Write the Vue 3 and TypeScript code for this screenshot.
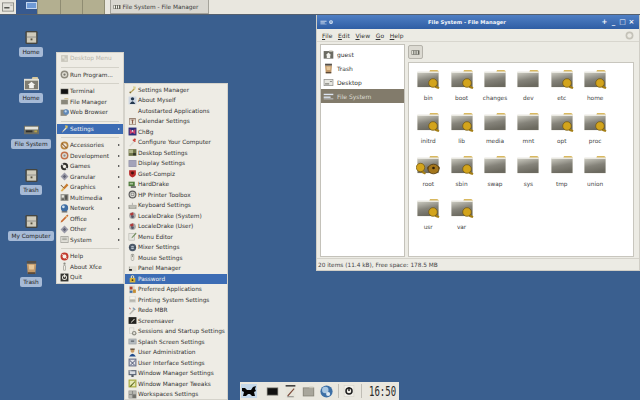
<script setup lang="ts">
import { h, type FunctionalComponent } from 'vue'

type Shape = [string, string]
const r = (x: number, y: number, w: number, hh: number) => `M${x} ${y}h${w}v${hh}h${-w}z`
const c = (x: number, y: number, q: number) => `M${x - q} ${y}a${q} ${q} 0 1 0 ${q * 2} 0a${q} ${q} 0 1 0 ${-q * 2} 0z`
const folder = (body: string, tab = '#c9b27a'): Shape[] => [
  ['M8 2h6q1 0 1 1v2H7z', tab],
  [r(1, 4, 14, 10), '#e4e2da'],
  [r(2, 5, 12, 8), body],
]
const diamond: Shape[] = [
  ['M8 1l7 7-7 7-7-7z', '#9a9aa8'],
  ['M8 5l3 3-3 3-3-3z', '#5f6270'],
]
const locale: Shape[] = [
  [c(8, 8, 6), '#a8a8a8'],
  ['M3 5l6-3 1 4-4 3z', '#b03a3a'],
  [c(8, 10, 2.5), '#555566'],
]
const icons: Record<string, Shape[]> = {
  driveBox: [['M3 1h10q1.500 0 1.500 1.500v11q0 1.500-1.500 1.500H3q-1.500 0-1.500-1.500v-11Q1.500 1 3 1z', '#45453f'], [r(3, 2.5, 10, 11), '#cfcbbb'], [r(3, 7, 10, 1), '#8f8f8a'], [r(7, 9, 2, 2), '#55503f']],
  homeFolder: [['M9 1h5q1 0 1 1v2H8z', '#d8c89a'], [r(0, 3, 16, 12), '#e0dfd6'], [r(1, 5, 14, 9), '#7f7d72'], ['M8 6l4 3.500h-1.500V13h-5V9.500H4z', '#f4f4f0']],
  fsDrive: [[r(0, 4, 16, 9), '#6e6e62'], [r(1, 5, 14, 3), '#e4e4dc'], [r(2, 9, 7, 2), '#2e2e2a'], [r(11, 9, 3, 2), '#b7a44a']],
  trash: [[r(3, 1, 10, 3), '#55504a'], ['M3 4h10l-1 11H4z', '#c39a6a'], ['M5 5h6l-.5 5h-5z', '#e6c79a'], [r(4, 13, 8, 2), '#5b4a3a']],
  desk: [[r(1, 3, 14, 10), '#8b8b87'], [r(2, 4, 12, 8), '#e6e6e0'], [r(3, 9, 6, 2), '#8a8a84'], [r(10, 6, 3, 1), '#666']],
  faded: [[r(2, 2, 12, 12), '#c8c6bc'], [r(4, 4, 4, 4), '#e6e4da'], [r(8, 8, 4, 4), '#dedcd2']],
  run: [[c(8, 8, 7), '#8d8a7e'], [c(8, 8, 4.5), '#dcdad0'], [c(8, 8, 2), '#77756c']],
  terminal: [[r(1, 3, 14, 10), '#77776f'], [r(2, 4, 12, 8), '#111']],
  fileman: folder('#8a887c'),
  web: [[r(1, 3, 11, 11), '#8c8a80'], [c(11, 7, 5), '#5f88b8'], [c(10, 6, 2), '#c6d8ea']],
  settings: [['M3 14l7-8 2 2-8 7z', '#e8e4d0'], ['M9 2l5 1-1 5-3-1z', '#d8c060'], ['M2 15l2-3 1 1z', '#555']],
  access: [[c(8, 8, 7), '#b88440'], [c(8, 8, 4), '#efe6d4'], ['M4 4l8 8-1 1-8-8z', '#703f1c']],
  dev: [[c(8, 8, 7), '#c0704a'], [c(8, 8, 4.5), '#d9d8d2'], [c(8, 8, 2), '#8b8b8b']],
  games: [[c(8, 8, 6.5), '#33332f'], [c(8, 8, 3), '#f2f0e8'], [c(4, 4, 2), '#ddd'], [c(12, 12, 2), '#ddd']],
  granular: diamond,
  graphics: [['M12 1l3 3-7 7-3-2z', '#c87a2c'], ['M5 9l3 2-4 4-3-1z', '#e0b050'], ['M2 3l5 5-1 1-5-5z', '#70502a']],
  multimedia: [[r(1, 2, 14, 12), '#8f8f88'], [r(3, 4, 4, 4), '#e8e8e0'], [r(9, 4, 4, 8), '#55554f'], [r(3, 10, 4, 2), '#55554f']],
  network: [[c(8, 7, 6.5), '#3f6ea3'], [c(6, 5, 2.5), '#cfe0ef'], [r(3, 13, 10, 2), '#555']],
  office: [['M13 1l2 2L4 14l-3 1 1-3z', '#c86a30'], ['M11 3l2 2-2 2-2-2z', '#e8c080']],
  system: [[r(1, 2, 14, 12), '#8d8d86'], [r(2, 3, 12, 10), '#e0dfd8'], [r(4, 5, 8, 1), '#77776f'], [r(4, 8, 8, 1), '#77776f']],
  help: [[c(8, 8, 7), '#c23b2e'], [c(8, 8, 3.5), '#f4f2ea'], ['M3 3l3 2-1 1-2-2zM13 13l-3-2 1-1 2 2z', '#f4f2ea']],
  about: [[c(8, 3, 2), '#8b8b82'], [r(6, 6, 4, 9), '#8b8b82'], [r(7, 7, 2, 7), '#f0eee6']],
  quit: [[r(1, 1, 14, 14), '#33332f'], [c(8, 8, 4.5), '#e8e6de'], [c(8, 8, 2.8), '#33332f'], [r(7, 2, 2, 6), '#e8e6de']],
  mgr: [['M3 14l7-8 2 2-8 7z', '#b8a050'], ['M9 2l5 1-1 5-3-1z', '#d8d090'], [c(4, 13, 1.5), '#7b6a30']],
  myself: [[r(1, 1, 14, 14), '#cfd7e2'], [c(8, 5, 3), '#23374f'], ['M3 14q5-9 10 0z', '#23374f']],
  calendar: [[r(2, 2, 12, 12), '#8d7565'], [r(3, 4, 10, 9), '#e7e1d6'], [r(7, 5, 2, 7), '#8b5a44'], [r(5, 5, 6, 1), '#8b5a44']],
  chbg: [[r(1, 1, 14, 14), '#2b2f7a'], ['M3 3l5 5 5-5v10l-5-3-5 3z', '#c9406e'], [c(8, 7, 1.5), '#f0f0f0']],
  configure: [['M2 14l9-10 2 2-9 9z', '#d8d6d0'], ['M9 2l5 4-2 1-4-3z', '#d23a32'], [c(12, 3, 2), '#c23a32']],
  desktopS: [[r(1, 2, 14, 12), '#6e7448'], [r(2, 3, 7, 6), '#b2b58c'], [r(9, 9, 5, 4), '#33352a']],
  displayS: [[r(1, 2, 14, 12), '#8c8ca4'], [r(2, 3, 12, 10), '#a3a3ba']],
  compiz: [['M2 2h12v7q0 4-6 6-6-2-6-6z', '#b82a2a'], [c(8, 7, 2.6), '#47120f']],
  hard: [[r(1, 3, 11, 8), '#4e7a3c'], [r(3, 5, 6, 3), '#a8c09a'], [r(5, 11, 9, 3), '#666']],
  hp: [[c(8, 8, 7), '#5a5a5a'], [c(8, 8, 5), '#d6d6d0'], [r(5, 5, 6, 5), '#666'], [r(6, 6, 4, 3), '#e4e4de']],
  keyboard: [[r(1, 7, 14, 7), '#9a9a92'], [r(2, 8, 12, 2), '#d2d2cb'], [r(3, 11, 10, 2), '#c4c4bc'], [r(7, 3, 1, 4), '#888']],
  locale,
  menuEd: [[r(1, 2, 11, 13), '#b2b2ab'], [r(2, 3, 9, 11), '#e5e5de'], ['M14 1l1 2-7 7-2 1 1-2z', '#6f8a58']],
  mixer: [[c(8, 8, 6.5), '#4d5a6a'], [c(8, 8, 3), '#b9c4cf'], [r(2, 7, 12, 1), '#2b3644']],
  mouse: [['M5 3q3-3 6 0v9q-3 4-6 0z', '#9a9a92'], ['M6 4q2-2 4 0v8q-2 2-4 0z', '#e8e6de'], [r(7, 4, 2, 3), '#8b8b82']],
  panel: [[r(1, 4, 14, 9), '#dedcd2'], [r(2, 9, 5, 3), '#1d1d1d'], [r(2, 5, 1, 3), '#777']],
  password: [[r(3, 7, 10, 8), '#d8b23a'], ['M5 7V4q3-4 6 0v3h-2V4q-1-1-2 0v3z', '#eadfb6'], [c(8, 11, 1.6), '#45360c']],
  preferred: [[r(2, 1, 10, 14), '#d9d4c8'], [r(3, 3, 5, 5), '#b3412c'], [r(9, 8, 5, 6), '#c58c2e'], [r(3, 10, 5, 4), '#3f6ea3']],
  printing: [[r(2, 2, 12, 12), '#dcdcd6'], [r(4, 3, 8, 4), '#f2f2ec'], [r(3, 8, 10, 4), '#b6b6ae']],
  redo: [['M2 14l9-10 2 2-9 9z', '#b6b6ae'], ['M9 2l5 4-2 1-4-3z', '#7d9ab5'], ['M2 2l3 3-1 1-2-2z', '#c0564a']],
  saver: [[r(1, 2, 14, 12), '#22221f'], ['M5 11l6-6 1 1-6 6z', '#dad8ce']],
  sessions: [[r(2, 1, 9, 11), '#c8c8c0'], [r(3, 2, 7, 9), '#ecebe4'], [c(11, 11, 4), '#8b8b82'], [c(11, 11, 2), '#e4e2da']],
  splash: [[r(1, 3, 14, 10), '#8e9499'], [r(2, 4, 12, 8), '#b7bdc1'], [r(5, 6, 6, 3), '#6f767c']],
  userAdm: [[c(8, 5, 3.5), '#c79a62'], ['M2 15q6-10 12 0z', '#1f4a8c'], [r(4, 1, 8, 2), '#4a3a2a']],
  uiS: [[r(1, 1, 14, 14), '#69708a'], [r(3, 3, 10, 10), '#e2e3e8'], ['M4 4l8 8-1 1-8-8zM12 4l1 1-8 8-1-1z', '#505874']],
  wmS: [[r(1, 2, 14, 9), '#5b6474'], [r(3, 4, 10, 5), '#d9dce2'], [r(6, 11, 4, 3), '#3c4351'], [r(2, 3, 4, 1), '#fff']],
  wmT: [[r(1, 1, 14, 14), '#a6a83a'], [r(3, 3, 10, 10), '#e6e8b5'], ['M3 13L12 4l1 1-8 9z', '#5f6a1e']],
  work: [[r(1, 1, 14, 14), '#8a8a86'], [r(2, 2, 5, 5), '#b9b9b3'], [r(9, 2, 5, 5), '#b9b9b3'], [r(2, 9, 5, 5), '#b9b9b3'], [r(9, 9, 5, 5), '#6f6f6a']],
  xlogo: [[r(0, 1, 16, 14), '#c4d8ea'], ['M1 5l3 0 2 2h4l2-3 3-1-1 3 1 2-2 1 1 4h-3l-2-2H7l-2 2H2l1-4-2-1z', '#050505']],
  note: [[r(2, 0, 12, 16), '#e6e4da'], [r(2, 0, 12, 2), '#444'], ['M4 13L12 4l1 1-8 9z', '#7d4a3a'], [r(4, 14, 8, 1), '#777']],
  panelFolder: [[r(1, 3, 14, 11), '#86847a'], [r(2, 4, 12, 9), '#a8a69c'], [r(9, 2, 5, 2), '#c8c6b8']],
  globe: [[c(8, 8, 7.5), '#3c6fa6'], [c(6.5, 6, 4), '#a9c7e2'], [c(10, 11, 2.5), '#dfe9f2']],
  power: [[r(1, 0, 14, 16), '#d9d7cd'], [r(2, 1, 12, 14), '#f1efe8'], [c(8, 8, 5), '#1d1d1d'], [c(8, 8, 3), '#f1efe8'], [r(7, 3, 2, 5), '#1d1d1d']],
  topDrive: [[r(0, 2, 16, 12), '#7b7b75'], [r(1, 3, 14, 10), '#e2e1da'], [r(3, 8, 7, 2), '#55554f'], [r(11, 5, 3, 1), '#888']],
  wmDrive: [[r(1, 4, 14, 2), '#dde6f3'], [r(1, 8, 10, 2), '#dde6f3'], [r(1, 11, 14, 1), '#dde6f3']],
  wmBall: [[c(8, 8, 5), '#dce8f6'], [c(8, 8, 2), '#3a6cb0']],
  pathDrive: [[r(1, 4, 14, 8), '#65655c'], [r(2, 5, 2, 6), '#f0f0e8'], [r(6, 5, 2, 6), '#f0f0e8'], [r(10, 5, 2, 6), '#f0f0e8']],
  spinner: [[c(8, 8, 7), '#c4c2b8'], [c(8, 8, 4), '#eceae2']],
  guest: [[r(1, 3, 14, 11), '#6b6b62'], [r(9, 2, 5, 2), '#c8c6b8'], ['M8 5l4 4h-1.5v4h-5V9H4z', '#f3f3ee']],
}

const Ico: FunctionalComponent<{ name: string; size?: number }> = (p) =>
  h('svg', { viewBox: '0 0 16 16', width: p.size ?? 9, height: p.size ?? 9 },
    (icons[p.name] ?? []).map(([d, f]) => h('path', { d, fill: f })))
Ico.props = ['name', 'size']

const deskIcons = [
  { label: 'Home', icon: 'driveBox' },
  { label: 'Home', icon: 'homeFolder' },
  { label: 'File System', icon: 'fsDrive' },
  { label: 'Trash', icon: 'driveBox' },
  { label: 'My Computer', icon: 'driveBox' },
  { label: 'Trash', icon: 'trash' },
]

interface MI { label?: string; icon?: string; sub?: boolean; active?: boolean; off?: boolean; sep?: boolean }
const mainMenu: MI[] = [
  { label: 'Desktop Menu', icon: 'faded', off: true }, { sep: true },
  { label: 'Run Program...', icon: 'run' }, { sep: true },
  { label: 'Terminal', icon: 'terminal' },
  { label: 'File Manager', icon: 'fileman' },
  { label: 'Web Browser', icon: 'web' }, { sep: true },
  { label: 'Settings', icon: 'settings', sub: true, active: true }, { sep: true },
  { label: 'Accessories', icon: 'access', sub: true },
  { label: 'Development', icon: 'dev', sub: true },
  { label: 'Games', icon: 'games', sub: true },
  { label: 'Granular', icon: 'granular', sub: true },
  { label: 'Graphics', icon: 'graphics', sub: true },
  { label: 'Multimedia', icon: 'multimedia', sub: true },
  { label: 'Network', icon: 'network', sub: true },
  { label: 'Office', icon: 'office', sub: true },
  { label: 'Other', icon: 'granular', sub: true },
  { label: 'System', icon: 'system', sub: true }, { sep: true },
  { label: 'Help', icon: 'help' },
  { label: 'About Xfce', icon: 'about' },
  { label: 'Quit', icon: 'quit' },
]
const subMenu: MI[] = [
  { label: 'Settings Manager', icon: 'mgr' },
  { label: 'About Myself', icon: 'myself' },
  { label: 'Autostarted Applications' },
  { label: 'Calendar Settings', icon: 'calendar' },
  { label: 'ChBg', icon: 'chbg' },
  { label: 'Configure Your Computer', icon: 'configure' },
  { label: 'Desktop Settings', icon: 'desktopS' },
  { label: 'Display Settings', icon: 'displayS' },
  { label: 'Gset-Compiz', icon: 'compiz' },
  { label: 'HardDrake', icon: 'hard' },
  { label: 'HP Printer Toolbox', icon: 'hp' },
  { label: 'Keyboard Settings', icon: 'keyboard' },
  { label: 'LocaleDrake (System)', icon: 'locale' },
  { label: 'LocaleDrake (User)', icon: 'locale' },
  { label: 'Menu Editor', icon: 'menuEd' },
  { label: 'Mixer Settings', icon: 'mixer' },
  { label: 'Mouse Settings', icon: 'mouse' },
  { label: 'Panel Manager', icon: 'panel' },
  { label: 'Password', icon: 'password', active: true },
  { label: 'Preferred Applications', icon: 'preferred' },
  { label: 'Printing System Settings', icon: 'printing' },
  { label: 'Redo MBR', icon: 'redo' },
  { label: 'Screensaver', icon: 'saver' },
  { label: 'Sessions and Startup Settings', icon: 'sessions' },
  { label: 'Splash Screen Settings', icon: 'splash' },
  { label: 'User Administration', icon: 'userAdm' },
  { label: 'User Interface Settings', icon: 'uiS' },
  { label: 'Window Manager Settings', icon: 'wmS' },
  { label: 'Window Manager Tweaks', icon: 'wmT' },
  { label: 'Workspaces Settings', icon: 'work' },
]
const places = [
  { label: 'guest', icon: 'guest' },
  { label: 'Trash', icon: 'trash' },
  { label: 'Desktop', icon: 'desk' },
  { label: 'File System', icon: 'wmDrive', active: true },
]
const menus = [['F', 'ile'], ['E', 'dit'], ['V', 'iew'], ['G', 'o'], ['H', 'elp']]
const files = [
  { n: 'bin', k: 1 }, { n: 'boot', k: 1 }, { n: 'changes' }, { n: 'dev' }, { n: 'etc', k: 1 }, { n: 'home', k: 1 },
  { n: 'initrd', k: 1 }, { n: 'lib', k: 1 }, { n: 'media' }, { n: 'mnt' }, { n: 'opt', k: 1 }, { n: 'proc', k: 1 },
  { n: 'root', k: 1, bear: 1 }, { n: 'sbin', k: 1 }, { n: 'swap' }, { n: 'sys' }, { n: 'tmp' }, { n: 'union' },
  { n: 'usr', k: 1 }, { n: 'var', k: 1 },
]
const launchers = ['terminal', 'note', 'panelFolder', 'globe']
</script>

<template>
  <div class="screen">
    <svg class="defs" width="0" height="0">
      <defs>
        <linearGradient id="fbody" x1="0" y1="0" x2="0.3" y2="1">
          <stop offset="0" stop-color="#c8c7bd" />
          <stop offset=".55" stop-color="#85837a" />
          <stop offset="1" stop-color="#6c6a60" />
        </linearGradient>
      </defs>
    </svg>

    <header class="top-panel">
      <span class="panel-drive"><Ico name="topDrive" :size="12" /></span>
      <div class="pager">
        <div class="ws ws-on"><span class="ws-win"></span></div>
        <div class="ws"></div>
        <div class="ws"></div>
        <div class="ws"></div>
      </div>
      <div class="task"><Ico name="pathDrive" :size="8" /><span>File System - File Manager</span></div>
    </header>

    <main class="desktop">
      <div class="desk-icons">
        <div v-for="(d, i) in deskIcons" :key="i" class="desk-icon">
          <Ico :name="d.icon" :size="15" />
          <span class="desk-label">{{ d.label }}</span>
        </div>
      </div>

      <nav class="menu main-menu">
        <template v-for="(m, i) in mainMenu" :key="i">
          <div v-if="m.sep" class="sep"></div>
          <div v-else class="item" :class="{ active: m.active, off: m.off }">
            <span class="mi"><Ico v-if="m.icon" :name="m.icon" /></span>
            <span class="ml">{{ m.label }}</span>
            <span v-if="m.sub" class="arrow"></span>
          </div>
        </template>
      </nav>

      <nav class="menu sub-menu">
        <div v-for="m in subMenu" :key="m.label" class="item" :class="{ active: m.active }">
          <span class="mi"><Ico v-if="m.icon" :name="m.icon" /></span>
          <span class="ml">{{ m.label }}</span>
        </div>
      </nav>

      <section class="window">
        <div class="titlebar">
          <span class="tb-left"><Ico name="wmDrive" :size="7" /><Ico name="wmBall" :size="6" /></span>
          <span class="tb-title">File System - File Manager</span>
          <span class="tb-btns"><i>+</i><i>_</i><i>□</i><i>×</i></span>
        </div>
        <div class="menubar">
          <span v-for="m in menus" :key="m[0]" class="mb"><u>{{ m[0] }}</u>{{ m[1] }}</span>
          <span class="throbber"><Ico name="spinner" :size="9" /></span>
        </div>
        <div class="body">
          <aside class="sidebar">
            <div v-for="p in places" :key="p.label" class="place" :class="{ active: p.active }">
              <Ico :name="p.icon" :size="11" />
              <span>{{ p.label }}</span>
            </div>
          </aside>
          <div class="right">
            <div class="pathbar"><span class="pathbtn"><Ico name="pathDrive" :size="9" /></span></div>
            <div class="iconview">
              <div v-for="f in files" :key="f.n" class="file">
                <svg width="24" height="20" viewBox="0 0 24 20">
                  <path d="M14 1h7q1.500 0 1.500 1.500V4H13z" fill="#d8b860" />
                  <rect x="1" y="2.500" width="22" height="16" rx="1" fill="#e9e8e1" />
                  <rect x="1.500" y="4" width="21" height="14" fill="url(#fbody)" />
                  <template v-if="f.k && !f.bear">
                    <path d="M19 15.500l4.500 3-1 1.500-3-1-2-2z" fill="#a37d14" />
                    <circle cx="17" cy="14" r="4.300" fill="#d3a41c" stroke="#6e5510" stroke-width=".7" />
                  </template>
                  <template v-if="f.bear">
                    <path d="M6 15l4 3-1 1.500-3-1.500-1-2z" fill="#a37d14" />
                    <circle cx="4.500" cy="12.500" r="4.200" fill="#d3a41c" stroke="#6e5510" stroke-width=".7" />
                    <circle cx="13" cy="13" r="1.800" fill="#5f4210" />
                    <circle cx="22" cy="13" r="1.800" fill="#5f4210" />
                    <ellipse cx="17.500" cy="14" rx="5.500" ry="4.800" fill="#a4761c" stroke="#4f370e" stroke-width=".8" />
                    <circle cx="17.500" cy="13" r="1.300" fill="#2a1c08" />
                  </template>
                </svg>
                <span class="fname">{{ f.n }}</span>
              </div>
            </div>
          </div>
        </div>
        <footer class="status">20 items (11.4 kB), Free space: 178.5 MB</footer>
      </section>

      <div class="bottom-panel">
        <span class="launcher xlogo"><Ico name="xlogo" :size="16" /></span>
        <span v-for="l in launchers" :key="l" class="launcher"><Ico :name="l" :size="13" /></span>
        <span class="div"></span>
        <span class="launcher power"><Ico name="power" :size="12" /></span>
        <span class="div"></span>
        <span class="clock">16:50</span>
      </div>
    </main>
  </div>
</template>

<style>
html, body { margin: 0; background: #3a5f8f; }
</style>

<style scoped>
.screen {
  width: 640px; height: 400px; overflow: hidden; display: flex; flex-direction: column;
  font-family: "DejaVu Sans", sans-serif; font-size: 5.8px; color: #333;
}
.defs { position: absolute; }
.top-panel {
  height: 15px; flex: none; display: flex; align-items: stretch; background: #e9e7df;
  border-bottom: 1px solid #55606e; box-sizing: border-box;
}
.panel-drive { width: 16px; display: flex; align-items: center; justify-content: center; }
.pager { display: flex; width: 89px; }
.ws { flex: 1; background: #b3af90; border-right: 1px solid #8f8c72; }
.ws-on { background: #36598f; position: relative; }
.ws-win { position: absolute; left: 10px; top: 2px; width: 11px; height: 7px; background: #6f9ad6; border: 1px solid #c4d6ef; box-sizing: border-box; }
.task {
  margin-left: 5px; width: 99px; display: flex; align-items: center; gap: 1.500px; padding-left: 2px; box-sizing: border-box;
  background: #d9d7d0; border: 1px solid #a5a39b; border-top: 0; font-size: 5.8px; color: #3a3a3a; white-space: nowrap;
}
.desktop { position: relative; flex: 1; background: #3a5f8f; }
.desk-icons { position: absolute; left: 0; top: 15px; width: 62px; display: flex; flex-direction: column; }
.desk-icon { height: 46px; display: flex; flex-direction: column; align-items: center; gap: 2px; }
.desk-label {
  background: #a6bad6; border-radius: 2px; padding: 0 3px; line-height: 10px; height: 10px; color: #222; font-size: 5.8px;
}
.menu { position: absolute; background: #eeece5; border: 1px solid #d5d3cb; box-sizing: border-box; }
.main-menu { left: 56px; top: 37px; width: 68px; height: 232px; }
.sub-menu { left: 124px; top: 68px; width: 104px; height: 317px; padding-top: .5px; }
.item { height: 10.5px; display: flex; align-items: center; padding-left: 3px; color: #333; }
.item .mi { width: 9px; flex: none; display: flex; align-items: center; }
.item .ml { margin-left: 1px; white-space: nowrap; flex: 1; }
.item.active { background: #3c6cb4; color: #f2f2f2; }
.item.off { color: #b5b3aa; }
.sep { height: 6px; margin: 0 4px; position: relative; }
.sep::after { content: ""; position: absolute; left: 0; right: 0; top: 3px; height: 1px; background: #d4d2c9; }
.arrow { width: 0; height: 0; margin-right: 3px; border-left: 2px solid #333; border-top: 1.500px solid transparent; border-bottom: 1.500px solid transparent; }
.active .arrow { border-left-color: #eee; }

.window {
  position: absolute; left: 316px; top: 0; width: 324px; height: 256px; background: #ecebe4;
  display: flex; flex-direction: column; box-sizing: border-box; border: 1px solid #d0cec6; border-top: 0;
}
.titlebar {
  height: 14px; flex: none; display: flex; align-items: center;
  background: linear-gradient(#4f7fc4, #2f5ea4); color: #f4f6fa;
}
.tb-left { display: flex; align-items: center; gap: 1px; padding-left: 3px; width: 17px; box-sizing: border-box; }
.tb-title { flex: 1; text-align: center; font-weight: bold; font-size: 5.200px; }
.tb-btns { display: flex; padding-right: 3px; }
.tb-btns i { width: 9px; text-align: center; font-style: normal; font-size: 7px; font-weight: bold; line-height: 9px; }
.menubar { height: 13px; flex: none; display: flex; align-items: center; padding-left: 5px; gap: 5.5px; font-size: 6px; border-bottom: 1px solid #d8d6ce; box-sizing: border-box; }
.mb { letter-spacing: .1px; }
.throbber { margin-left: auto; margin-right: 5px; display: flex; }
.body { flex: 1; display: flex; padding: 2px 5px 1px 3px; min-height: 0; }
.sidebar { width: 85px; flex: none; background: #fff; border: 1px solid #c4c2ba; box-sizing: border-box; padding-top: 2px; }
.place { height: 14px; display: flex; align-items: center; gap: 3px; padding-left: 2px; font-size: 6px; }
.place.active { background: #827b6b; color: #dedbd2; }
.right { flex: 1; margin-left: 3px; display: flex; flex-direction: column; min-width: 0; }
.pathbar { height: 18px; flex: none; padding-top: 1px; box-sizing: border-box; }
.pathbtn { display: flex; align-items: center; justify-content: center; width: 15px; height: 14px; background: #dcdad2; border: 1px solid #b5b3ab; border-radius: 2px; box-sizing: border-box; }
.iconview {
  flex: 1; background: #fff; border: 1px solid #c8c6be; box-sizing: border-box;
  display: grid; grid-template-columns: repeat(6, 33.4px); grid-auto-rows: 43px; align-content: start; padding: 6px 0 0 2.500px;
}
.file { display: flex; flex-direction: column; align-items: center; height: 43px; }
.file svg { display: block; flex: none; }
.fname { margin-top: 4.500px; line-height: 8px; font-size: 5.8px; color: #444; }
.status { height: 12px; flex: none; display: flex; align-items: center; padding-left: 1px; font-size: 5.8px; color: #444; border-top: 1px solid #d5d3cb; box-sizing: border-box; }

.bottom-panel {
  position: absolute; left: 240px; bottom: 0; width: 159px; height: 18px; background: #e9e7df;
  display: flex; align-items: center; padding-left: 1px; box-sizing: border-box;
}
.launcher { width: 18px; flex: none; display: flex; }
.xlogo { width: 25px; }
.power { width: 12px; margin-left: 4px; }
.div { width: 1px; height: 14px; background: #c0beb6; flex: none; }
.power + .div { margin-left: 6px; }
.clock {
  font-family: "DejaVu Sans Mono", monospace; font-size: 9px; color: #2a2a2a; margin-left: 7px;
  display: inline-block; transform: scaleY(1.55);
}
</style>
